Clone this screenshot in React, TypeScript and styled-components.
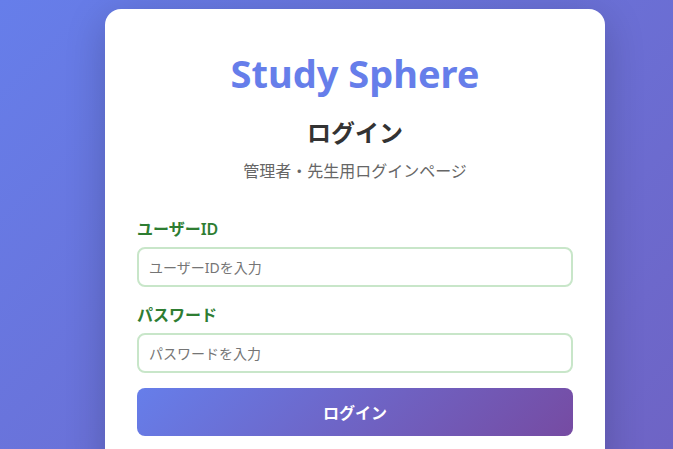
import React from "react";
import styled, { createGlobalStyle } from "styled-components";

const GlobalStyle = createGlobalStyle`
  html, body { margin: 0; padding: 0; }
  body {
    font-family: "Noto Sans", "Noto Sans CJK JP", sans-serif;
    background: linear-gradient(135deg, #667eea 0%, #764ba2 100%);
  }
  * { box-sizing: border-box; }
`;

const Page = styled.div`
  min-height: 1500px;
  display: flex;
  justify-content: flex-start;
  align-items: flex-start;
  padding: 9px 0 40px 105px;
`;

const Card = styled.div`
  width: 500px;
  flex: none;
  background: #ffffff;
  border-radius: 16px;
  box-shadow: 0 10px 40px rgba(0, 0, 0, 0.2);
  padding: 40px 32px 40px;
  display: flex;
  flex-direction: column;
`;

const Brand = styled.h1`
  margin: 0;
  font-size: 38px;
  line-height: 48px;
  font-weight: 700;
  color: #667eea;
  text-align: center;
`;

const Heading = styled.h2`
  margin: 21px 0 0;
  font-size: 24px;
  line-height: 29px;
  font-weight: 700;
  color: #333333;
  text-align: center;
`;

const Subtitle = styled.p`
  margin: 12px 0 0;
  font-size: 16px;
  line-height: 24px;
  color: #666666;
  text-align: center;
`;

const Form = styled.form`
  margin-top: 34px;
  display: flex;
  flex-direction: column;
`;

const Field = styled.div<{ $last?: boolean }>`
  display: flex;
  flex-direction: column;
  margin-bottom: ${(p) => (p.$last ? "15px" : "16px")};
`;

const Label = styled.label`
  font-size: 16px;
  line-height: 24px;
  font-weight: 600;
  color: #2e7d32;
  margin-bottom: 6px;
`;

const Input = styled.input`
  width: 100%;
  height: 40px;
  border: 2px solid #c8e6c9;
  border-radius: 8px;
  padding: 0 10px;
  font-family: inherit;
  font-size: 14px;
  color: #333;
  outline: none;
  background: #fff;
  &::placeholder { color: #757575; }
`;

const Button = styled.button`
  width: 100%;
  height: 48px;
  border: none;
  border-radius: 8px;
  background: linear-gradient(135deg, #667eea 0%, #764ba2 100%);
  color: #ffffff;
  font-family: inherit;
  font-size: 16px;
  font-weight: 700;
  cursor: pointer;
`;

export default function App() {
  return (
    <>
      <GlobalStyle />
      <Page>
        <Card>
          <Brand>Study Sphere</Brand>
          <Heading>ログイン</Heading>
          <Subtitle>管理者・先生用ログインページ</Subtitle>
          <Form onSubmit={(e) => e.preventDefault()}>
            <Field>
              <Label htmlFor="uid">ユーザーID</Label>
              <Input id="uid" placeholder="ユーザーIDを入力" />
            </Field>
            <Field $last>
              <Label htmlFor="pw">パスワード</Label>
              <Input id="pw" type="password" placeholder="パスワードを入力" />
            </Field>
            <Button type="submit">ログイン</Button>
          </Form>
        </Card>
      </Page>
    </>
  );
}
